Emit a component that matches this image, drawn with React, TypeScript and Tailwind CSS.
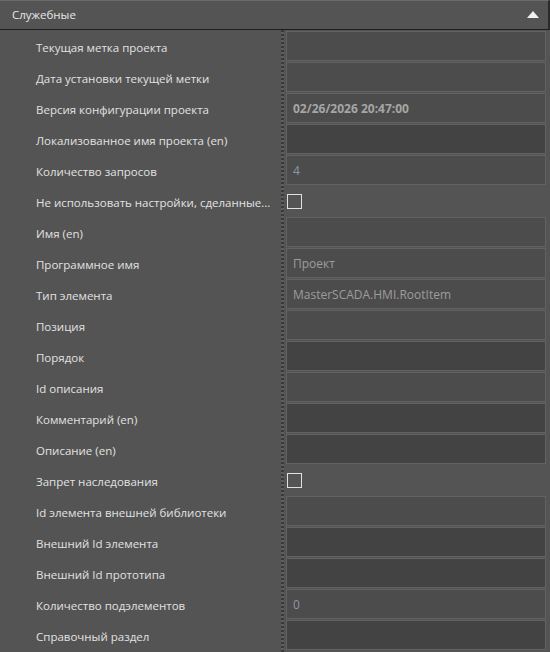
import React from "react";

type Row = { label: string; kind: "ro" | "ed" | "cb"; value?: string; bold?: boolean; blue?: boolean };

const rows: Row[] = [
  { label: "Текущая метка проекта", kind: "ro" },
  { label: "Дата установки текущей метки", kind: "ro" },
  { label: "Версия конфигурации проекта", kind: "ro", value: "02/26/2026 20:47:00", bold: true },
  { label: "Локализованное имя проекта (en)", kind: "ed" },
  { label: "Количество запросов", kind: "ro", value: "4", blue: true },
  { label: "Не использовать настройки, сделанные...", kind: "cb" },
  { label: "Имя (en)", kind: "ro" },
  { label: "Программное имя", kind: "ro", value: "Проект" },
  { label: "Тип элемента", kind: "ro", value: "MasterSCADA.HMI.RootItem" },
  { label: "Позиция", kind: "ro" },
  { label: "Порядок", kind: "ed" },
  { label: "Id описания", kind: "ro" },
  { label: "Комментарий (en)", kind: "ed" },
  { label: "Описание (en)", kind: "ed" },
  { label: "Запрет наследования", kind: "cb" },
  { label: "Id элемента внешней библиотеки", kind: "ro" },
  { label: "Внешний Id элемента", kind: "ed" },
  { label: "Внешний Id прототипа", kind: "ed" },
  { label: "Количество подэлементов", kind: "ro", value: "0", blue: true },
  { label: "Справочный раздел", kind: "ed" },
];

export default function App() {
  return (
    <div
      className="w-[550px] h-[652px] overflow-hidden bg-[#545454] text-[11.5px]"
      style={{ fontFamily: '"Open Sans", "Noto Sans", sans-serif' }}
    >
      <div className="h-[30px] flex items-center justify-between border-t border-t-[#6a6a6a] border-b border-b-[#1e1e1e] border-r-2 border-r-[#2a2a2a] pl-[12px] pr-[9px] text-[#e6e6e6]">
        <span>Служебные</span>
        <svg width="12" height="7" viewBox="0 0 12 7" className="mt-[-1px]">
          <polygon points="6,0 12,7 0,7" fill="#f0f0f0" />
        </svg>
      </div>
      <div className="flex">
        <div className="w-[281px] flex flex-col pt-[2px]">
          {rows.map((r, i) => (
            <div key={i} className="h-[31px] flex items-center pl-[36px] text-[#e2e2e2] whitespace-nowrap">
              {r.label}
            </div>
          ))}
        </div>
        <div
          className="w-[3px] h-[622px]"
          style={{
            backgroundImage:
              "repeating-linear-gradient(180deg, #3a3a3a 0px, #3a3a3a 2px, #5e5e5e 2px, #5e5e5e 4px)",
          }}
        />
        <div className="w-[2px]" />
        <div className="w-[260px] flex flex-col pt-[1px]">
          {rows.map((r, i) => (
            <div key={i} className="h-[31px] pb-[1px]">
              {r.kind === "cb" ? (
                <div className="h-full flex items-center pl-[1px] pt-[1px]">
                  <div className="w-[15px] h-[15px] border border-[#e0e0e0]" />
                </div>
              ) : (
                <div
                  className={
                    "h-full border border-[#626262] flex items-center pl-[6px] pt-[1px] " +
                    (r.kind === "ed" ? "bg-[#434343]" : "bg-[#4c4c4c]")
                  }
                >
                  {r.value && (
                    <span
                      className={
                        r.bold
                          ? "font-bold text-[#a6a6a6] text-[12px]"
                          : r.blue
                          ? "text-[#8d98a6] text-[12px]"
                          : "text-[#9c9c9c] text-[12px]"
                      }
                    >
                      {r.value}
                    </span>
                  )}
                </div>
              )}
            </div>
          ))}
        </div>
      </div>
    </div>
  );
}
